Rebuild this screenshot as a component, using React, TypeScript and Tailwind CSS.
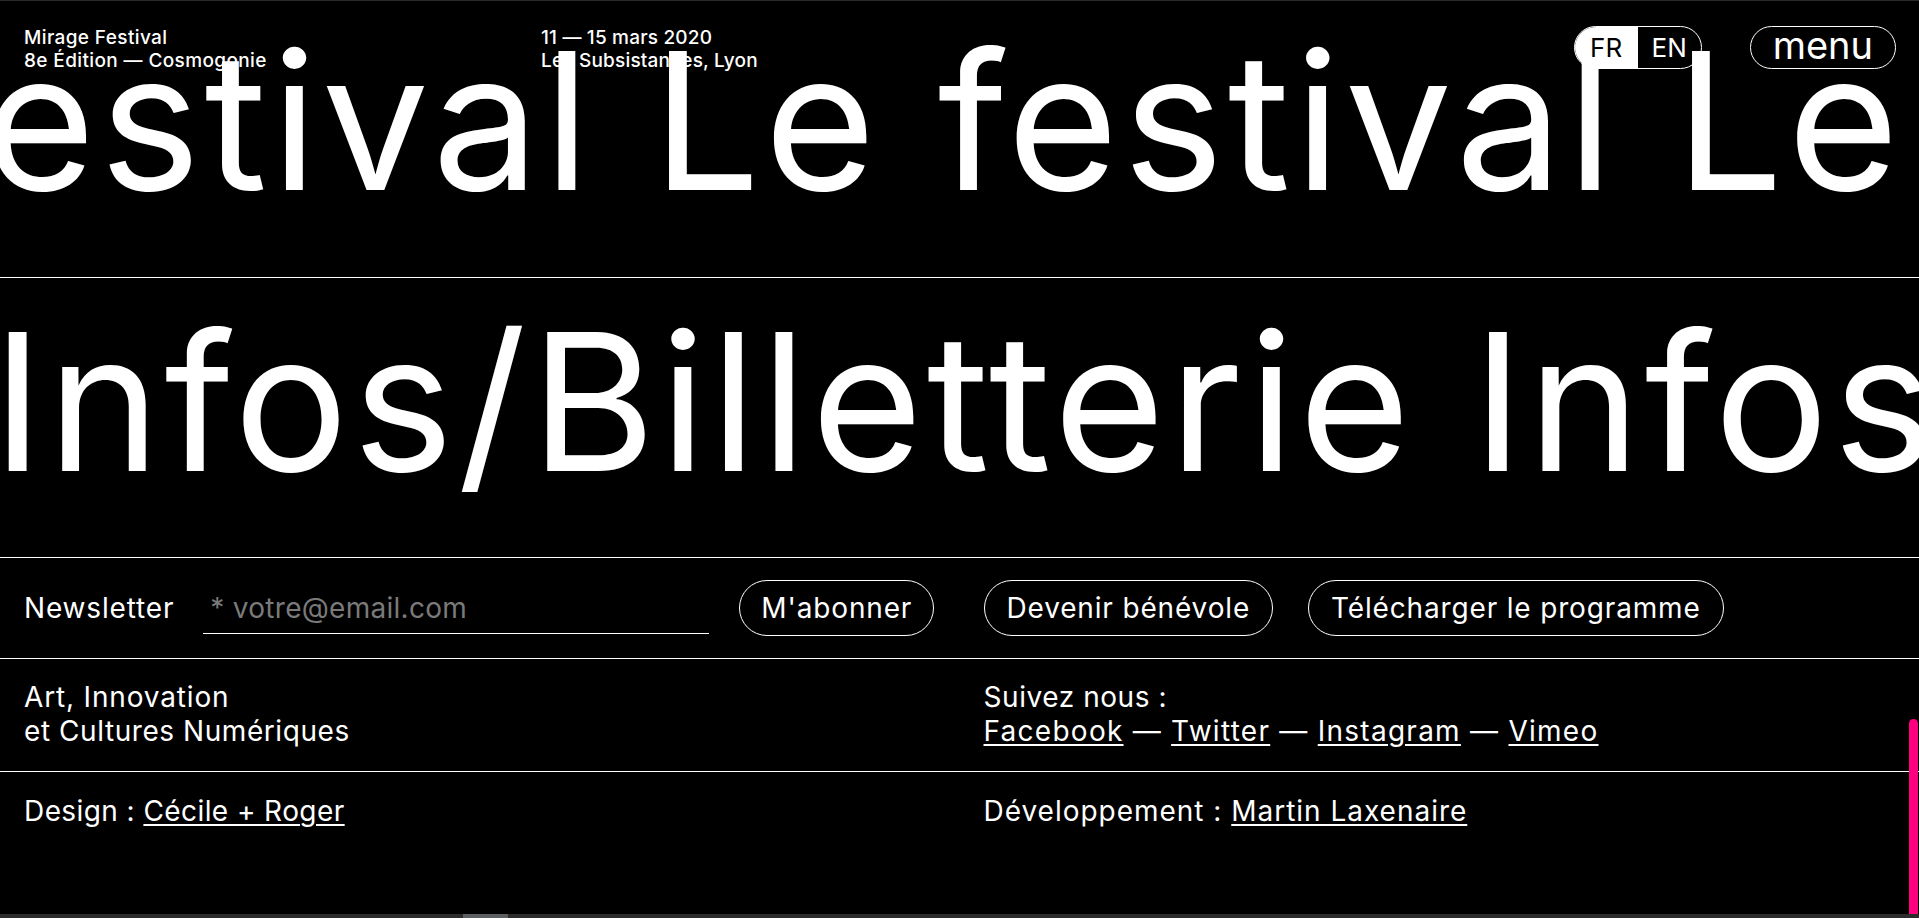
const App = () => {
  return (
    <div className="relative h-[918px] w-full overflow-hidden border-t border-[#2b2b2b] bg-black text-white font-['Inter',sans-serif]">
      {/* header over the marquee */}
      <header className="absolute inset-x-0 top-[25px] z-10 flex items-start pl-[24px] pr-[23px]">
        <div className="w-[517px] text-[19px] leading-[23px] font-medium tracking-[0.02em]">
          <p>Mirage Festival</p>
          <p>8e Édition — Cosmogonie</p>
        </div>
        <div className="flex-1 text-[19px] leading-[23px] font-medium tracking-[0.01em]">
          <p>11 — 15 mars 2020</p>
          <p>Les Subsistances, Lyon</p>
        </div>
        <div className="flex h-[43px] w-[128px] overflow-hidden rounded-full border border-white text-[26px] leading-none">
          <span className="flex w-[63px] items-center justify-center bg-white text-black">FR</span>
          <span className="flex flex-1 items-center justify-center">EN</span>
        </div>
        <button className="ml-[48px] flex h-[43px] items-center rounded-full border border-white px-[22px] pb-[5px] text-[38px] leading-none">
          menu
        </button>
      </header>

      {/* marquees */}
      <section className="h-[277px] overflow-hidden border-b border-white">
        <div className="ml-[-371px] whitespace-nowrap pt-[24px] text-[191px] leading-none tracking-[0.022em]">
          Le festival Le festival Le festival
        </div>
      </section>
      <section className="h-[280px] overflow-hidden border-b border-white">
        <div className="ml-[-8px] whitespace-nowrap pt-[28px] text-[191px] leading-none tracking-[0.022em]">
          Infos/Billetterie Infos/Billetterie
        </div>
      </section>

      {/* footer */}
      <div className="grid grid-cols-2 border-b border-white py-[22px] text-[28px] tracking-[0.03em]">
        <div className="flex items-center px-[24px]">
          <span className="leading-[34px]">Newsletter</span>
          <input
            type="email"
            placeholder="* votre@email.com"
            className="ml-[29px] h-[52px] w-[506px] border-b border-white bg-transparent pl-[7px] text-[28px] tracking-[0.01em] outline-none placeholder:text-[#7a7a7a]"
          />
          <button className="ml-[30px] flex h-[56px] items-center rounded-full border border-white px-[21px] leading-none">
            M'abonner
          </button>
        </div>
        <div className="flex items-center gap-[35px] px-[24px]">
          <button className="flex h-[56px] items-center rounded-full border border-white px-[22px] leading-none">
            Devenir bénévole
          </button>
          <button className="flex h-[56px] items-center rounded-full border border-white px-[22px] leading-none">
            Télécharger le programme
          </button>
        </div>
      </div>

      <div className="grid grid-cols-2 border-b border-white pt-[21px] pb-[23px] text-[28px] leading-[34px] tracking-[0.02em]">
        <div className="px-[24px]">
          <p className="tracking-[0.03em]">Art, Innovation</p>
          <p>et Cultures Numériques</p>
        </div>
        <div className="px-[24px]">
          <p>Suivez nous :</p>
          <p className="tracking-[0.045em]">
            <a className="underline decoration-2 underline-offset-[3px]">Facebook</a> —{" "}
            <a className="underline decoration-2 underline-offset-[3px]">Twitter</a> —{" "}
            <a className="underline decoration-2 underline-offset-[3px]">Instagram</a> —{" "}
            <a className="underline decoration-2 underline-offset-[3px]">Vimeo</a>
          </p>
        </div>
      </div>

      <div className="grid grid-cols-2 pt-[22px] text-[28px] leading-[34px]">
        <p className="px-[24px] tracking-[0.015em]">
          Design : <a className="underline decoration-2 underline-offset-[3px]">Cécile + Roger</a>
        </p>
        <p className="px-[24px] tracking-[0.035em]">
          Développement : <a className="underline decoration-2 underline-offset-[3px]">Martin Laxenaire</a>
        </p>
      </div>

      {/* scroll indicators */}
      <div className="absolute right-[1px] top-[718px] h-[196px] w-[9px] rounded-t-full bg-[#ff0080]" />
      <div className="absolute inset-x-0 bottom-0 h-[4px] bg-[#2c2c2c]">
        <div className="ml-[463px] h-full w-[45px] bg-[#5c5f62]" />
      </div>
    </div>
  );
};

export default App;
